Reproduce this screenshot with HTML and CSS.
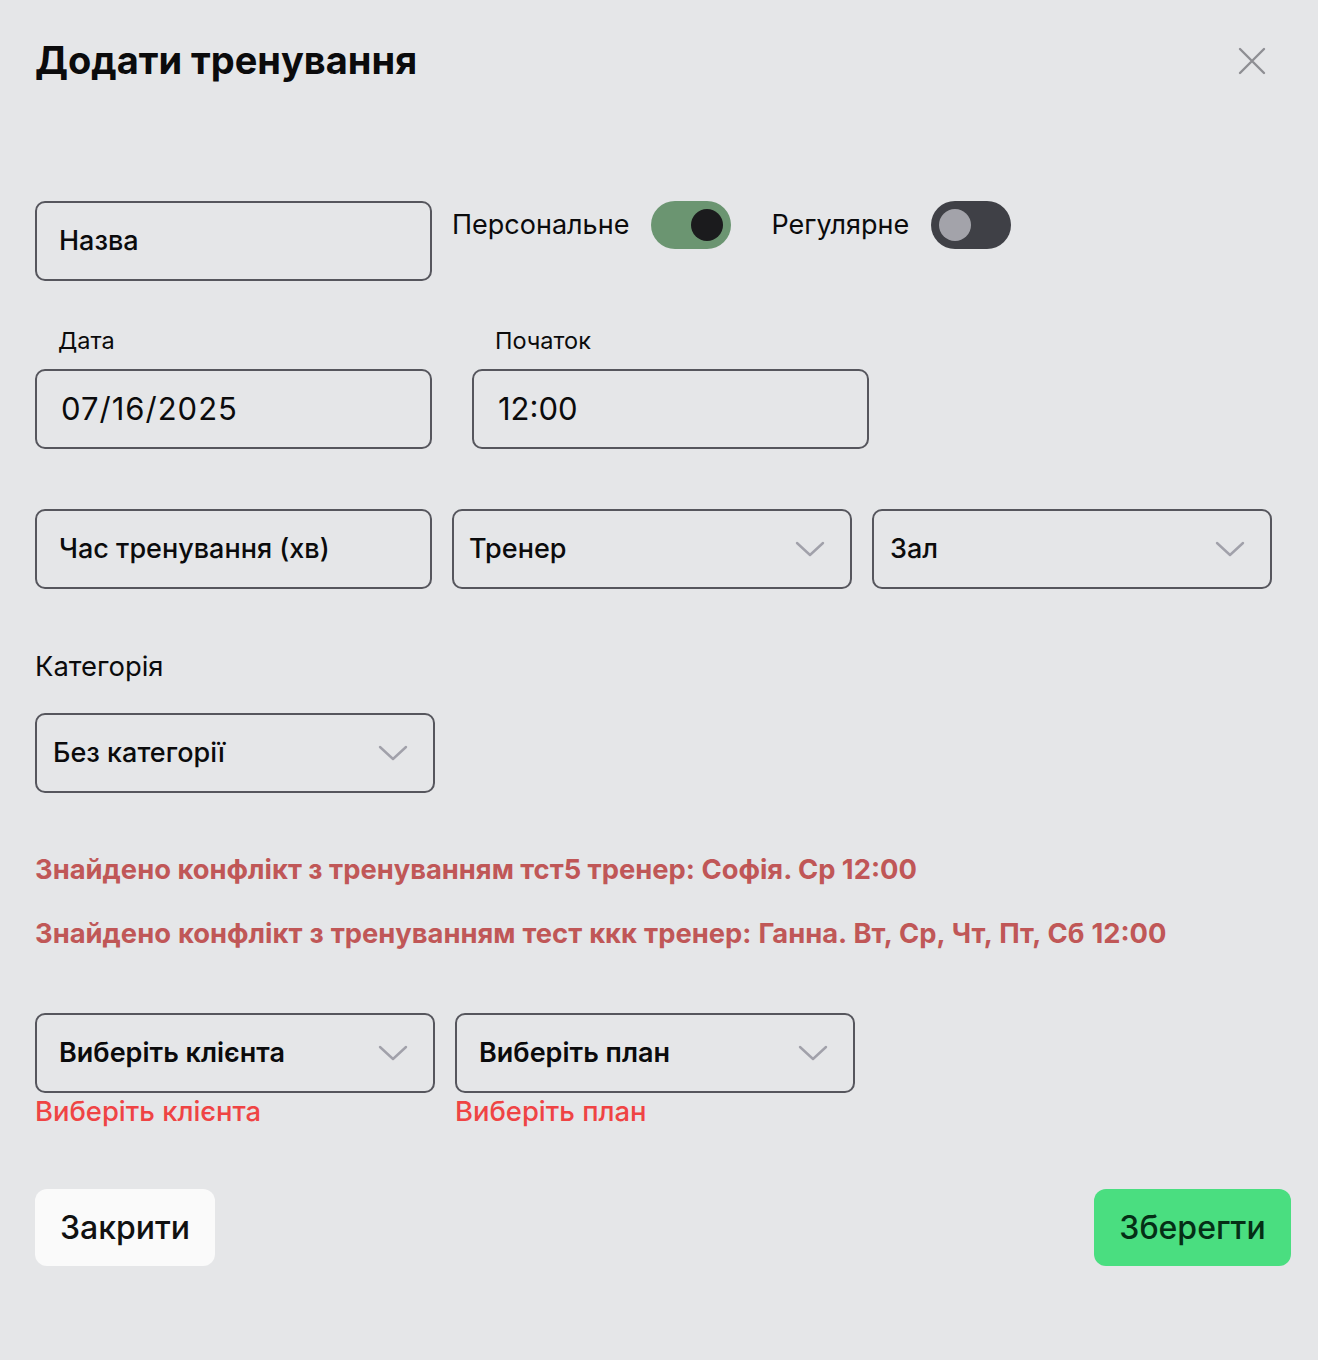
FILE: index.html
```html
<!DOCTYPE html>
<html lang="uk">
<head>
<meta charset="utf-8">
<title>Додати тренування</title>
<link rel="stylesheet" href="styles.css">
</head>
<body>
<div class="modal">
  <div class="header">
    <h1 class="title">Додати тренування</h1>
    <button class="close" aria-label="Закрити">
      <svg width="28" height="28" viewBox="0 0 28 28"><path d="M2 2 L26 26 M26 2 L2 26" stroke="#8e8e93" stroke-width="2.4" stroke-linecap="round" fill="none"/></svg>
    </button>
  </div>

  <div class="row-top">
    <div class="box w397 pad22 medium">Назва</div>
    <div class="switch-group">
      <span class="switch-label">Персональне</span>
      <span class="switch on"><span class="knob"></span></span>
      <span class="switch-label second">Регулярне</span>
      <span class="switch off"><span class="knob"></span></span>
    </div>
  </div>

  <div class="date-row">
    <div class="field">
      <div class="small-label">Дата</div>
      <div class="box pad24 date wide">07/16/2025</div>
    </div>
    <div class="field">
      <div class="small-label">Початок</div>
      <div class="box pad24 date">12:00</div>
    </div>
  </div>

  <div class="three-row">
    <div class="box pad22 medium">Час тренування (хв)</div>
    <div class="box select pad15">Тренер
      <svg class="chev" width="30" height="16" viewBox="0 0 30 16"><path d="M2 2 L15 14 L28 2" stroke="#a1a1aa" stroke-width="2.4" fill="none" stroke-linecap="round" stroke-linejoin="round"/></svg>
    </div>
    <div class="box select pad16">Зал
      <svg class="chev" width="30" height="16" viewBox="0 0 30 16"><path d="M2 2 L15 14 L28 2" stroke="#a1a1aa" stroke-width="2.4" fill="none" stroke-linecap="round" stroke-linejoin="round"/></svg>
    </div>
  </div>

  <div class="cat-label">Категорія</div>
  <div class="box select w400 pad16 medium cat-select">Без категорії
    <svg class="chev" width="30" height="16" viewBox="0 0 30 16"><path d="M2 2 L15 14 L28 2" stroke="#a1a1aa" stroke-width="2.4" fill="none" stroke-linecap="round" stroke-linejoin="round"/></svg>
  </div>

  <div class="conflicts">
    <p class="conflict">Знайдено конфлікт з тренуванням тст5 тренер: Софія. Ср 12:00</p>
    <p class="conflict">Знайдено конфлікт з тренуванням тест ккк тренер: Ганна. Вт, Ср, Чт, Пт, Сб 12:00</p>
  </div>

  <div class="pick-row">
    <div class="pick">
      <div class="box select pad22 semibold">Виберіть клієнта
        <svg class="chev" width="30" height="16" viewBox="0 0 30 16"><path d="M2 2 L15 14 L28 2" stroke="#a1a1aa" stroke-width="2.4" fill="none" stroke-linecap="round" stroke-linejoin="round"/></svg>
      </div>
      <div class="err">Виберіть клієнта</div>
    </div>
    <div class="pick">
      <div class="box select pad22 semibold">Виберіть план
        <svg class="chev" width="30" height="16" viewBox="0 0 30 16"><path d="M2 2 L15 14 L28 2" stroke="#a1a1aa" stroke-width="2.4" fill="none" stroke-linecap="round" stroke-linejoin="round"/></svg>
      </div>
      <div class="err">Виберіть план</div>
    </div>
  </div>

  <div class="actions">
    <button class="btn btn-close">Закрити</button>
    <button class="btn btn-save">Зберегти</button>
  </div>
</div>
</body>
</html>
```

FILE: styles.css
```css
* { box-sizing: border-box; }
html, body { margin: 0; padding: 0; }
body {
  background: #e5e6e8;
  font-family: Inter, "Noto Sans", sans-serif;
  color: #0b0b0c;
  width: 1318px;
  height: 1360px;
  overflow: hidden;
}
.modal { padding: 34px 27px 0 35px; }
.header {
  display: flex;
  justify-content: space-between;
  align-items: center;
  height: 52px;
}
.title {
  margin: 0;
  font-size: 38px;
  font-weight: 700;
  line-height: 52px;
}
.close {
  background: none;
  border: 0;
  padding: 0;
  width: 28px;
  height: 28px;
  margin-right: 25px;
  margin-top: 2px;
  cursor: pointer;
}
.close svg { display: block; }

.box {
  height: 80px;
  border: 2px solid #56565d;
  border-radius: 10px;
  display: flex;
  align-items: center;
  font-size: 27px;
  line-height: 32px;
  color: #0b0b0c;
  white-space: nowrap;
}
.w397 { width: 397px; }
.w400 { width: 400px; }
.pad22 { padding-left: 22px; }
.pad24 { padding-left: 24px; }
.pad16 { padding-left: 16px; }
.pad15 { padding-left: 15px; }
.medium { font-weight: 500; }
.semibold { font-weight: 600; }
.date { font-size: 31px; font-weight: 400; }
.date.wide { letter-spacing: 1px; }
.select { justify-content: space-between; padding-right: 25px; }
.chev { display: block; flex: none; }

.row-top {
  margin-top: 115px;
  display: flex;
  align-items: flex-start;
  gap: 20px;
}
.switch-group {
  display: flex;
  align-items: center;
  height: 48px;
  gap: 22px;
}
.switch-label { font-size: 27px; line-height: 32px; }
.switch-label.second { margin-left: 18px; }
.switch {
  width: 80px;
  height: 48px;
  border-radius: 24px;
  display: flex;
  align-items: center;
  padding: 0 8px;
}
.switch .knob {
  width: 32px;
  height: 32px;
  border-radius: 50%;
}
.switch.on { background: #6b9571; justify-content: flex-end; }
.switch.on .knob { background: #1b1b1d; }
.switch.off { background: #3f4046; justify-content: flex-start; }
.switch.off .knob { background: #a3a3aa; }

.date-row {
  margin-top: 48px;
  display: grid;
  grid-template-columns: 397px 397px;
  gap: 40px;
}
.small-label {
  font-size: 23.5px;
  line-height: 24px;
  padding-left: 23px;
  margin-bottom: 16px;
}

.three-row {
  margin-top: 60px;
  display: grid;
  grid-template-columns: 397px 400px 400px;
  gap: 20px;
}
.three-row .select { font-weight: 500; }

.cat-label {
  margin-top: 62px;
  font-size: 27.4px;
  line-height: 30px;
}
.cat-select { margin-top: 32px; }

.conflicts { margin-top: 61px; }
.conflict {
  margin: 0 0 32px;
  font-size: 27.35px;
  font-weight: 700;
  line-height: 32px;
  color: #c05757;
}
.conflict:last-child { margin-bottom: 0; word-spacing: 0.55px; }

.pick-row {
  margin-top: 63px;
  display: grid;
  grid-template-columns: 400px 400px;
  gap: 20px;
}
.err {
  font-size: 27.4px;
  font-weight: 500;
  line-height: 32px;
  margin-top: 2px;
  color: #ef4444;
}

.actions {
  margin-top: 62px;
  display: flex;
  justify-content: space-between;
}
.btn {
  height: 77px;
  border: 0;
  border-radius: 12px;
  font-family: inherit;
  font-size: 32px;
  font-weight: 500;
  padding: 0;
}
.btn-close { width: 180px; background: #fafafa; color: #111; }
.btn-save { width: 197px; background: #4ade80; color: #052e16; }
```
